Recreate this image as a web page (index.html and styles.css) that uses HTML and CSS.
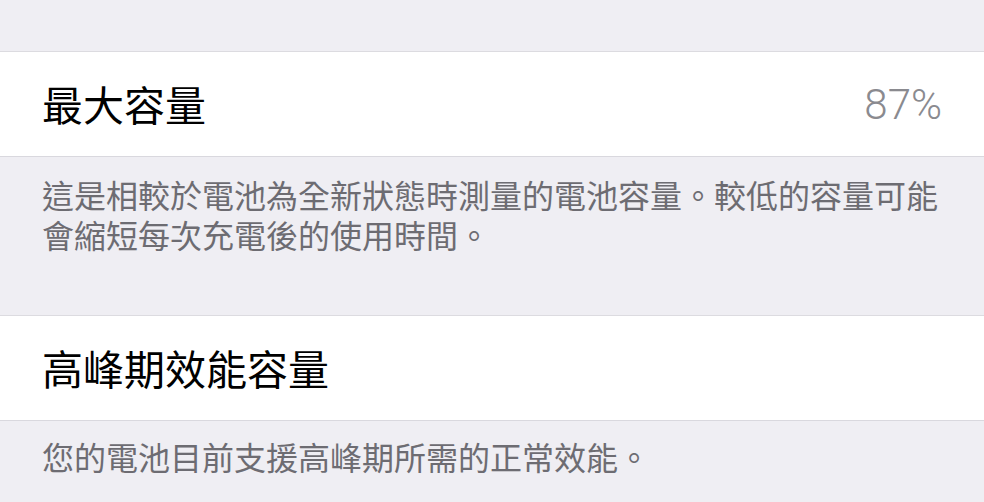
FILE: index.html
```html
<!DOCTYPE html>
<html lang="zh-Hant">
<head>
  <meta charset="UTF-8" />
  <meta name="viewport" content="width=device-width, initial-scale=1.0"/>
  <title>電池健康度</title>
  <link rel="stylesheet" href="styles.css">
</head>
<body>
  <div class="page">
    <!-- Previous group tail -->
    <div class="group-gap"></div>
    <!-- Maximum capacity -->
    <div class="cell">
      <span class="cell-label">最大容量</span>
      <span class="cell-value">87%</span>
    </div>
    <div class="group-footer tall">
      這是相較於電池為全新狀態時測量的電池容量。較低的容量可能會縮短每次充電後的使用時間。
    </div>
    <!-- Peak performance -->
    <div class="cell">
      <span class="cell-label">高峰期效能容量</span>
    </div>
    <div class="group-footer last">
      您的電池目前支援高峰期所需的正常效能。
    </div>
  </div>
</body>
</html>
```

FILE: styles.css
```css
/* Global Reset */
* { margin: 0; padding: 0; box-sizing: border-box; }
html, body {
  height: 100%;
  font-family: "Noto Sans CJK TC", "Noto Sans", sans-serif;
  background: #efeef3;
}
.page {
  display: flex;
  flex-direction: column;
}
/* Gray spacer above the first group */
.group-gap {
  height: 52px;
  border-bottom: 1px solid #dcdbe0;
}
/* Table cell */
.cell {
  height: 105px;
  display: flex;
  align-items: center;
  justify-content: space-between;
  padding: 0 42px;
  background: #fff;
  border-bottom: 1px solid #d9d8de;
}
.cell-label {
  font-size: 41px;
  color: #000;
  margin-top: -3px;
}
.cell-value {
  font-family: Roboto, "Liberation Sans", sans-serif;
  font-weight: 300;
  font-size: 42px;
  color: #8a8a8f;
}
/* Footer text below a group */
.group-footer {
  padding: 17px 42px 0;
  height: 80px;
  font-size: 32px;
  line-height: 40px;
  color: #6d6c72;
  border-bottom: 1px solid #dcdbe0;
}
.group-footer.tall { height: 159px; padding-right: 40px; }
.group-footer.last { padding-top: 15px; border-bottom: none; }
```
